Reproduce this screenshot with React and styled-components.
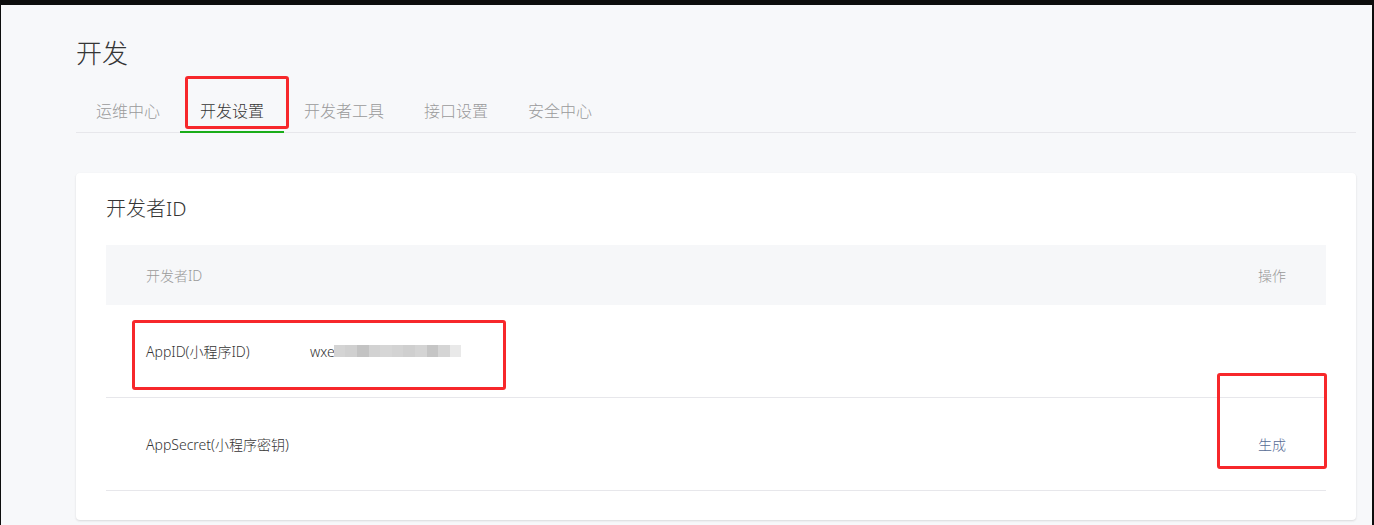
import React from "react";
import styled, { createGlobalStyle } from "styled-components";

const tabs = ["运维中心", "开发设置", "开发者工具", "接口设置", "安全中心"];
const mosaic = [
  "#d4d4d4", "#d0d0d0", "#c3c3c3", "#d2d2d2", "#d6d6d6", "#d3d3d3",
  "#cfcfcf", "#d4d4d4", "#c5c5c5", "#d5d5d5", "#e9e9e9",
];

//Funtions
function App() {
  return (
    <>
      <Global />
      <Frame>
        <Thumb />
        <Page>
          <Heading>开发</Heading>
          <Tabs>
            {tabs.map((t, i) => (
              <Tab key={t} active={i === 1}>
                {t}
              </Tab>
            ))}
          </Tabs>
          <Card>
            <CardTitle>开发者ID</CardTitle>
            <Table>
              <HeadRow>
                <span>开发者ID</span>
                <span>操作</span>
              </HeadRow>
              <Row>
                <Label>AppID(小程序ID)</Label>
                <Value>
                  wxe
                  <Mosaic>
                    {mosaic.map((c, i) => (
                      <Pixel key={i} color={c} />
                    ))}
                  </Mosaic>
                </Value>
              </Row>
              <Row>
                <Label>AppSecret(小程序密钥)</Label>
                <Value />
                <Action>生成</Action>
              </Row>
            </Table>
          </Card>
        </Page>
        <Mark top={76} left={185} width={104} height={53} />
        <Mark top={320} left={132} width={374} height={70} />
        <Mark top={373} left={1217} width={110} height={96} />
      </Frame>
    </>
  );
}

export default App;

//Styles
const Global = createGlobalStyle`
  html, body {
    margin: 0;
    padding: 0;
    background: #0d0d0d;
  }
  body {
    font-family: "Noto Sans", "Noto Sans CJK SC", sans-serif;
    font-weight: 300;
    color: #353535;
  }
`;

const Frame = styled.div`
  position: relative;
  box-sizing: border-box;
  width: 1374px;
  height: 525px;
  overflow: hidden;
  border-top: 5px solid #0d0d0d;
  border-left: 1px solid #0d0d0d;
  border-right: 2px solid #0d0d0d;
  background: #f7f8fa;
`;

const Thumb = styled.div`
  position: absolute;
  top: -5px;
  right: 1px;
  width: 50px;
  height: 5px;
  background: #cfcfcf;
  border-radius: 0 0 2px 2px;
`;

const Page = styled.div`
  width: 1280px;
  padding: 30px 0 0 75px;
`;

const Heading = styled.h1`
  margin: 0;
  font-size: 26px;
  font-weight: 300;
  line-height: 36px;
  color: #353535;
`;

const Tabs = styled.div`
  display: flex;
  margin-top: 20px;
  border-bottom: 1px solid #e7e7eb;
`;

const Tab = styled.div`
  padding: 0 20px;
  line-height: 40px;
  font-size: 16px;
  margin-bottom: -1px;
  color: ${(p) => (p.active ? "#353535" : "#9a9a9a")};
  border-bottom: 2px solid ${(p) => (p.active ? "#1aad19" : "transparent")};
`;

const Card = styled.div`
  margin-top: 40px;
  background: #fff;
  border-radius: 4px;
  box-shadow: 0 1px 2px rgba(150, 150, 150, 0.3);
  padding: 22px 30px 29px;
`;

const CardTitle = styled.h2`
  margin: 0 0 22px;
  font-size: 20px;
  font-weight: 300;
  line-height: 28px;
  color: #353535;
`;

const Table = styled.div`
  display: flex;
  flex-direction: column;
`;

const HeadRow = styled.div`
  display: flex;
  justify-content: space-between;
  align-items: center;
  height: 60px;
  padding: 0 40px;
  background: #f6f7f9;
  font-size: 14px;
  color: #9a9a9a;
`;

const Row = styled.div`
  display: flex;
  align-items: center;
  height: 92px;
  padding: 0 40px;
  border-bottom: 1px solid #e7e7eb;
  font-size: 14px;
  color: #353535;
`;

const Label = styled.div`
  width: 164px;
`;

const Value = styled.div`
  flex: 1;
  display: flex;
  align-items: center;
`;

const Mosaic = styled.div`
  display: flex;
  margin-left: -1px;
`;

const Pixel = styled.span`
  width: 11.6px;
  height: 12px;
  background: ${(p) => p.color};
`;

const Action = styled.a`
  color: #576b95;
  cursor: pointer;
`;

const Mark = styled.div`
  position: absolute;
  box-sizing: border-box;
  top: ${(p) => p.top - 5}px;
  left: ${(p) => p.left - 1}px;
  width: ${(p) => p.width}px;
  height: ${(p) => p.height}px;
  border: 3px solid #f7282b;
  border-radius: 3px;
  pointer-events: none;
`;
